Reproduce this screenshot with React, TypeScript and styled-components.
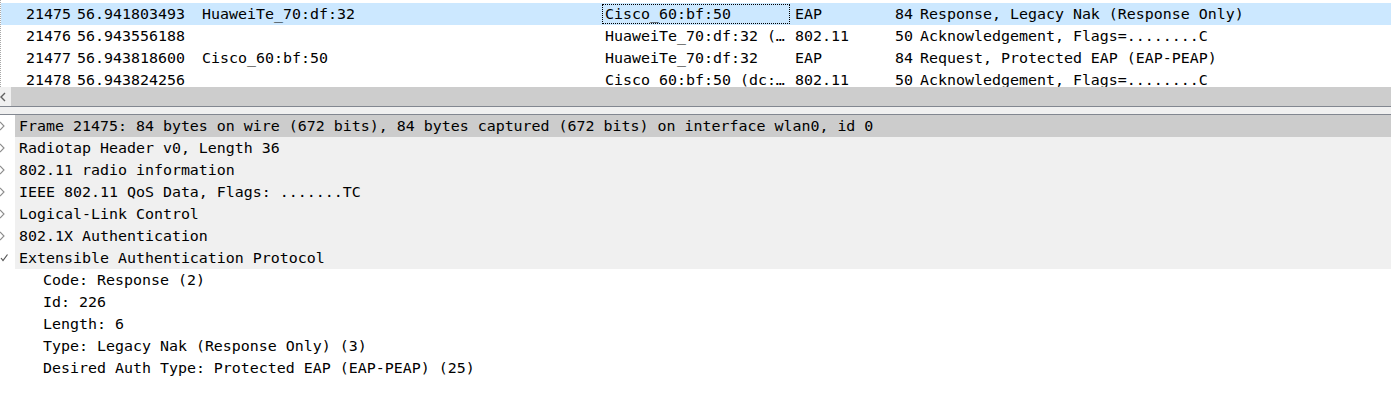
import React from "react";
import styled, { createGlobalStyle, css } from "styled-components";

const GlobalStyle = createGlobalStyle`
  html, body {
    margin: 0;
    padding: 0;
    background: #ffffff;
  }
  body {
    font-family: "DejaVu Sans Mono", "Liberation Mono", monospace;
    font-size: 14.95px;
    color: #000000;
  }
`;

const Root = styled.div`
  width: 1391px;
  height: 402px;
  display: flex;
  flex-direction: column;
  overflow: hidden;
  background: #ffffff;
`;

/* ---------- packet list ---------- */

const PacketList = styled.div`
  height: 84px;
  padding-top: 3px;
  overflow: hidden;
  border-left: 1px dotted #a8a8a8;
  display: flex;
  flex-direction: column;
`;

const PacketRow = styled.div<{ $selected?: boolean }>`
  flex: 0 0 22px;
  height: 22px;
  display: grid;
  grid-template-columns: 70px 126px 404px 190px 76px 46px 1fr;
  align-items: stretch;
  background: ${(p) => (p.$selected ? "#cce8ff" : "#ffffff")};
`;

const Cell = styled.div<{ $align?: "left" | "right"; $pl?: number; $pr?: number; $focus?: boolean }>`
  display: flex;
  align-items: center;
  justify-content: ${(p) => (p.$align === "right" ? "flex-end" : "flex-start")};
  padding-left: ${(p) => p.$pl ?? 0}px;
  padding-right: ${(p) => p.$pr ?? 0}px;
  white-space: pre;
  overflow: hidden;
  line-height: 22px;
  ${(p) =>
    p.$focus &&
    css`
      outline: 1px dotted #000000;
      outline-offset: -2px;
    `}
`;

/* ---------- scrollbar & splitter ---------- */

const HScrollbar = styled.div`
  height: 19px;
  display: flex;
`;

const ScrollButton = styled.div`
  width: 11px;
  background: #f0f0f0;
  display: flex;
  align-items: center;
`;

const ScrollTrack = styled.div`
  flex: 1;
  background: #cdcdcd;
`;

const Splitter = styled.div`
  height: 7px;
  background: #f0f0f0;
  border-top: 1px solid #828790;
  border-bottom: 1px solid #828790;
`;

/* ---------- details tree ---------- */

const Details = styled.div`
  flex: 1;
  background: #ffffff;
  display: flex;
  flex-direction: column;
`;

const TreeRow = styled.div`
  height: 22px;
  flex: 0 0 22px;
  display: flex;
`;

const Expander = styled.div`
  width: 15px;
  display: flex;
  align-items: center;
`;

const TreeLabel = styled.div<{ $selected?: boolean }>`
  flex: 1;
  padding-left: 4px;
  line-height: 22px;
  white-space: pre;
  background: ${(p) => (p.$selected ? "#cccccc" : "#f0f0f0")};
`;

const ChildLabel = styled.div`
  padding-left: 43px;
  line-height: 22px;
  white-space: pre;
`;

const ChevronRight = () => (
  <svg width="6" height="10" viewBox="0 0 6 10">
    <path d="M0 1 L4 5 L0 9" fill="none" stroke="#8c8c8c" strokeWidth="1.1" />
  </svg>
);

const ChevronDown = () => (
  <svg width="9" height="10" viewBox="0 0 9 10">
    <path d="M1 5 L3 7.5 L7.5 1.5" fill="none" stroke="#555555" strokeWidth="1.2" />
  </svg>
);

const ScrollLeftArrow = () => (
  <svg width="7" height="10" viewBox="0 0 7 10">
    <path d="M5 1 L1 5 L5 9" fill="none" stroke="#606060" strokeWidth="1.4" />
  </svg>
);

type Packet = {
  no: string;
  time: string;
  src: string;
  dst: string;
  proto: string;
  len: string;
  info: string;
};

const packets: Packet[] = [
  {
    no: "21475",
    time: "56.941803493",
    src: "HuaweiTe_70:df:32",
    dst: "Cisco_60:bf:50",
    proto: "EAP",
    len: "84",
    info: "Response, Legacy Nak (Response Only)",
  },
  {
    no: "21476",
    time: "56.943556188",
    src: "",
    dst: "HuaweiTe_70:df:32 (…",
    proto: "802.11",
    len: "50",
    info: "Acknowledgement, Flags=........C",
  },
  {
    no: "21477",
    time: "56.943818600",
    src: "Cisco_60:bf:50",
    dst: "HuaweiTe_70:df:32",
    proto: "EAP",
    len: "84",
    info: "Request, Protected EAP (EAP-PEAP)",
  },
  {
    no: "21478",
    time: "56.943824256",
    src: "",
    dst: "Cisco_60:bf:50 (dc:…",
    proto: "802.11",
    len: "50",
    info: "Acknowledgement, Flags=........C",
  },
];

const topLevel = [
  "Frame 21475: 84 bytes on wire (672 bits), 84 bytes captured (672 bits) on interface wlan0, id 0",
  "Radiotap Header v0, Length 36",
  "802.11 radio information",
  "IEEE 802.11 QoS Data, Flags: .......TC",
  "Logical-Link Control",
  "802.1X Authentication",
];

const eapChildren = [
  "Code: Response (2)",
  "Id: 226",
  "Length: 6",
  "Type: Legacy Nak (Response Only) (3)",
  "Desired Auth Type: Protected EAP (EAP-PEAP) (25)",
];

export default function App() {
  return (
    <>
      <GlobalStyle />
      <Root>
        <PacketList>
          {packets.map((p, i) => (
            <PacketRow key={p.no} $selected={i === 0}>
              <Cell $align="right">{p.no}</Cell>
              <Cell $pl={6}>{p.time}</Cell>
              <Cell $pl={5}>{p.src}</Cell>
              <Cell $pl={4} $focus={i === 0}>{p.dst}</Cell>
              <Cell $pl={4}>{p.proto}</Cell>
              <Cell $align="right">{p.len}</Cell>
              <Cell $pl={7}>{p.info}</Cell>
            </PacketRow>
          ))}
        </PacketList>
        <HScrollbar>
          <ScrollButton>
            <ScrollLeftArrow />
          </ScrollButton>
          <ScrollTrack />
        </HScrollbar>
        <Splitter />
        <Details>
          {topLevel.map((t, i) => (
            <TreeRow key={t}>
              <Expander>
                <ChevronRight />
              </Expander>
              <TreeLabel $selected={i === 0}>{t}</TreeLabel>
            </TreeRow>
          ))}
          <TreeRow>
            <Expander>
              <ChevronDown />
            </Expander>
            <TreeLabel>Extensible Authentication Protocol</TreeLabel>
          </TreeRow>
          {eapChildren.map((c) => (
            <TreeRow key={c}>
              <ChildLabel>{c}</ChildLabel>
            </TreeRow>
          ))}
        </Details>
      </Root>
    </>
  );
}
